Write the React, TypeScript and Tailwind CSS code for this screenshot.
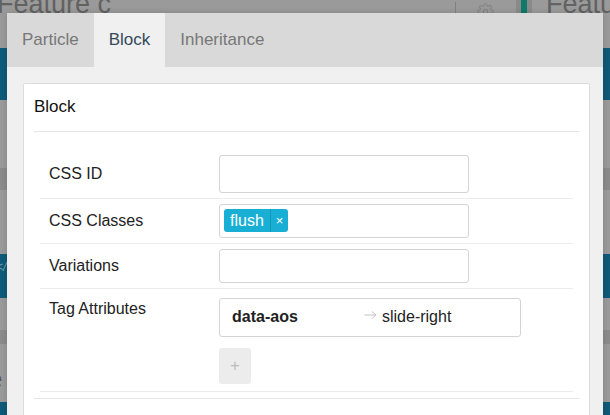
import React from 'react';

const font = { fontFamily: '"Liberation Sans", Arial, sans-serif' };

const Backdrop: React.FC = () => {
  return (
    <div className="absolute inset-0 flex flex-col bg-[#9a9a9a]">
      <div className="relative h-[13px] overflow-hidden">
        <span className="absolute left-[-3px] top-[-9px] text-[27px] leading-none text-[#626262]">Feature c</span>
        <span className="absolute left-[455px] top-[2px] h-[12px] w-px bg-[#808080]" />
        <svg className="absolute left-[477px] top-[3px]" width="17" height="17" viewBox="0 0 24 24" fill="none" stroke="#858585" strokeWidth="1.6">
          <circle cx="12" cy="12" r="3" />
          <path d="M19.4 15a1.7 1.7 0 0 0 .3 1.8l.1.1a2 2 0 1 1-2.8 2.8l-.1-.1a1.7 1.7 0 0 0-1.8-.3 1.7 1.7 0 0 0-1 1.5V21a2 2 0 0 1-4 0v-.1a1.7 1.7 0 0 0-1.1-1.5 1.7 1.7 0 0 0-1.8.3l-.1.1a2 2 0 1 1-2.8-2.8l.1-.1a1.7 1.7 0 0 0 .3-1.8 1.7 1.7 0 0 0-1.5-1H3a2 2 0 0 1 0-4h.1a1.7 1.7 0 0 0 1.5-1.1 1.7 1.7 0 0 0-.3-1.8l-.1-.1a2 2 0 1 1 2.8-2.8l.1.1a1.7 1.7 0 0 0 1.8.3H9a1.7 1.7 0 0 0 1-1.5V3a2 2 0 0 1 4 0v.1a1.7 1.7 0 0 0 1 1.5 1.7 1.7 0 0 0 1.8-.3l.1-.1a2 2 0 1 1 2.8 2.8l-.1.1a1.7 1.7 0 0 0-.3 1.8V9a1.7 1.7 0 0 0 1.5 1H21a2 2 0 0 1 0 4h-.1a1.7 1.7 0 0 0-1.5 1z" />
        </svg>
        <span className="absolute left-[516px] top-0 h-full w-[16px] bg-[#8a8a8a]" />
        <span className="absolute left-[521px] top-0 h-full w-[6px] bg-[#0f7a6a]" />
        <span className="absolute left-[546px] top-[-9px] text-[27px] leading-none text-[#626262]">Featu</span>
      </div>
      <div className="h-[35px]" />
      <div className="h-[52px] bg-[#0f5a78]" />
      <div className="h-[68px]" />
      <div className="h-[22px] bg-[#8b8b8b]" />
      <div className="relative h-[64px]">
        <span className="absolute left-[-9px] top-[14px] text-[26px] text-[#5a5a5a]">t</span>
      </div>
      <div className="relative h-[44px] bg-[#0f5a78]">
        <span className="absolute left-[-4px] top-[4px] text-[12px] italic text-[#6fa0b4]">&lt;/</span>
      </div>
      <div className="h-[32px]" />
      <div className="h-[14px] bg-[#8b8b8b]" />
      <div className="relative h-[58px]">
        <span className="absolute left-[-12px] top-[16px] text-[26px] text-[#5a5a5a]">e</span>
      </div>
      <div className="flex-1 bg-[#0f5a78]" />
    </div>
  );
};

const Row: React.FC<{ label: string; children: React.ReactNode; labelTop?: boolean }> = ({ label, children, labelTop }) => {
  return (
    <div className="flex border-b border-[#ececec] py-[5px]">
      <div className={`w-[179px] pl-[9px] text-[16px] text-[#222] ${labelTop ? 'pt-[3px]' : 'flex items-center'}`}>{label}</div>
      <div className="flex-1">{children}</div>
    </div>
  );
};

const App: React.FC = () => {
  return (
    <div className="relative h-[415px] w-[610px] overflow-hidden" style={font}>
      <Backdrop />
      <div className="absolute left-[7px] top-[13px] flex h-[410px] w-[596px] flex-col bg-[#f0f0f0] shadow-[0_0_6px_rgba(0,0,0,0.15)]">
        <div className="flex h-[54px] bg-[#d9d9d9] text-[17px]">
          <div className="flex items-center px-[15px] text-[#777]">Particle</div>
          <div className="flex items-center bg-[#f0f0f0] px-[15px] text-[#34495a]">Block</div>
          <div className="flex items-center px-[15px] text-[#777]">Inheritance</div>
        </div>
        <div className="pl-[16px] pr-[13px] pt-[16px]">
          <div className="rounded-[2px] border border-[#dcdcdc] bg-white px-[10px] pb-[20px]">
            <div className="border-b border-[#e6e6e6] pt-[10px] pb-[11px] text-[17px] text-[#111]">Block</div>
            <div className="px-[6px] pt-[18px]">
              <Row label="CSS ID">
                <div className="h-[38px] w-[250px] rounded-[3px] border border-[#d4d4d4] bg-white" />
              </Row>
              <Row label="CSS Classes">
                <div className="flex h-[34px] w-[250px] items-center rounded-[3px] border border-[#d4d4d4] bg-white px-[4px]">
                  <div className="flex h-[23px] items-stretch rounded-[3px] bg-[#19afd5] text-white">
                    <span className="flex items-center px-[6px] text-[16px]">flush</span>
                    <span className="flex items-center border-l border-[#1597b8] px-[5px] text-[13px]">×</span>
                  </div>
                </div>
              </Row>
              <Row label="Variations">
                <div className="h-[34px] w-[250px] rounded-[3px] border border-[#d4d4d4] bg-white" />
              </Row>
              <Row label="Tag Attributes" labelTop>
                <div className="pt-[4px] pb-[2px]">
                  <div className="flex h-[39px] w-[302px] items-center rounded-[3px] border border-[#d4d4d4] bg-white px-[12px] text-[16px]">
                    <span className="w-[132px] font-bold text-[#222]">data-aos</span>
                    <svg className="mr-[5px] mb-[4px]" width="13" height="10" viewBox="0 0 13 10" fill="none" stroke="#c4c4c4" strokeWidth="1">
                      <path d="M0.5 5h11.5M8 1.5l4 3.5-4 3.5" />
                    </svg>
                    <span className="text-[#222]">slide-right</span>
                  </div>
                  <button className="mt-[11px] flex h-[36px] w-[32px] items-center justify-center rounded-[3px] bg-[#ececec] text-[16px] font-light text-[#bbb]">+</button>
                </div>
              </Row>
            </div>
            <div className="mt-[6px] border-b border-[#e6e6e6]" />
          </div>
        </div>
      </div>
    </div>
  );
};

export default App;
